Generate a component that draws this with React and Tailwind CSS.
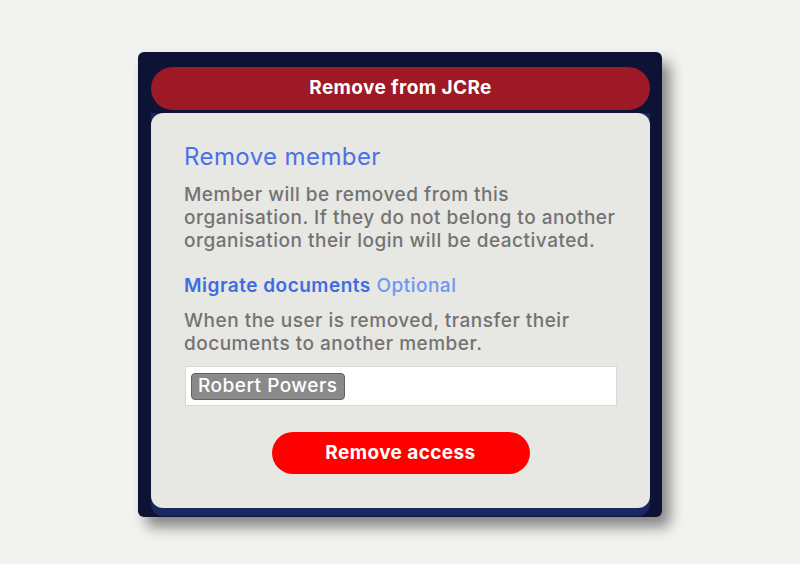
import React from 'react';

const font = { fontFamily: 'Inter, "Liberation Sans", sans-serif' };

function App() {
  return (
    <div className="min-h-screen w-full bg-[#f2f2f0] pt-[52px]" style={font}>
      <div className="mx-auto w-[524px] rounded-md bg-[#0d1334] pl-[13px] pr-[12px] pt-[15px] pb-[1px] shadow-[8px_10px_14px_rgba(0,0,0,0.45)]">
        {/* header pill */}
        <div className="flex h-[43px] items-center justify-center rounded-full bg-[#9d1926] text-[19px] font-bold tracking-[0.4px] text-white">
          Remove from JCRe
        </div>

        <div className="mt-[3px] rounded-b-xl bg-[#1b2763] pb-[8px]">
          <div className="rounded-xl bg-[#e7e7e3] px-[33px] pt-[30px] pb-[34px]">
            <h2 className="text-[24px] leading-[28px] tracking-[0.4px] text-[#4a72e6]">Remove member</h2>
            <p className="mt-[12px] text-[19px] leading-[23px] font-medium tracking-[0.5px] text-[#737373]">
              Member will be removed from this organisation. If they do not belong to another organisation their login will be deactivated.
            </p>

            <div className="mt-[22px] text-[19px] leading-[24px] font-medium tracking-[0.5px]">
              <span className="font-semibold text-[#3f6de0]">Migrate documents</span>{' '}
              <span className="text-[#6e98f0]">Optional</span>
            </div>
            <p className="mt-[11px] text-[19px] leading-[23px] font-medium tracking-[0.5px] text-[#737373]">
              When the user is removed, transfer their documents to another member.
            </p>

            <div className="mt-[11px] ml-px flex h-[40px] w-[432px] items-center border border-[#d8d8d8] bg-white px-[5px]">
              <span className="flex h-[27px] items-center rounded-[4px] border border-[#626262] bg-[#8a8a8a] px-[6px] text-[19px] font-medium tracking-[0.5px] text-white">
                Robert Powers
              </span>
            </div>

            <div className="mt-[26px] flex justify-center">
              <button className="flex h-[42px] w-[258px] items-center justify-center rounded-full bg-[#ff0000] text-[19px] font-bold tracking-[0.4px] text-white">
                Remove access
              </button>
            </div>
          </div>
        </div>
      </div>
    </div>
  );
}

export default App;
